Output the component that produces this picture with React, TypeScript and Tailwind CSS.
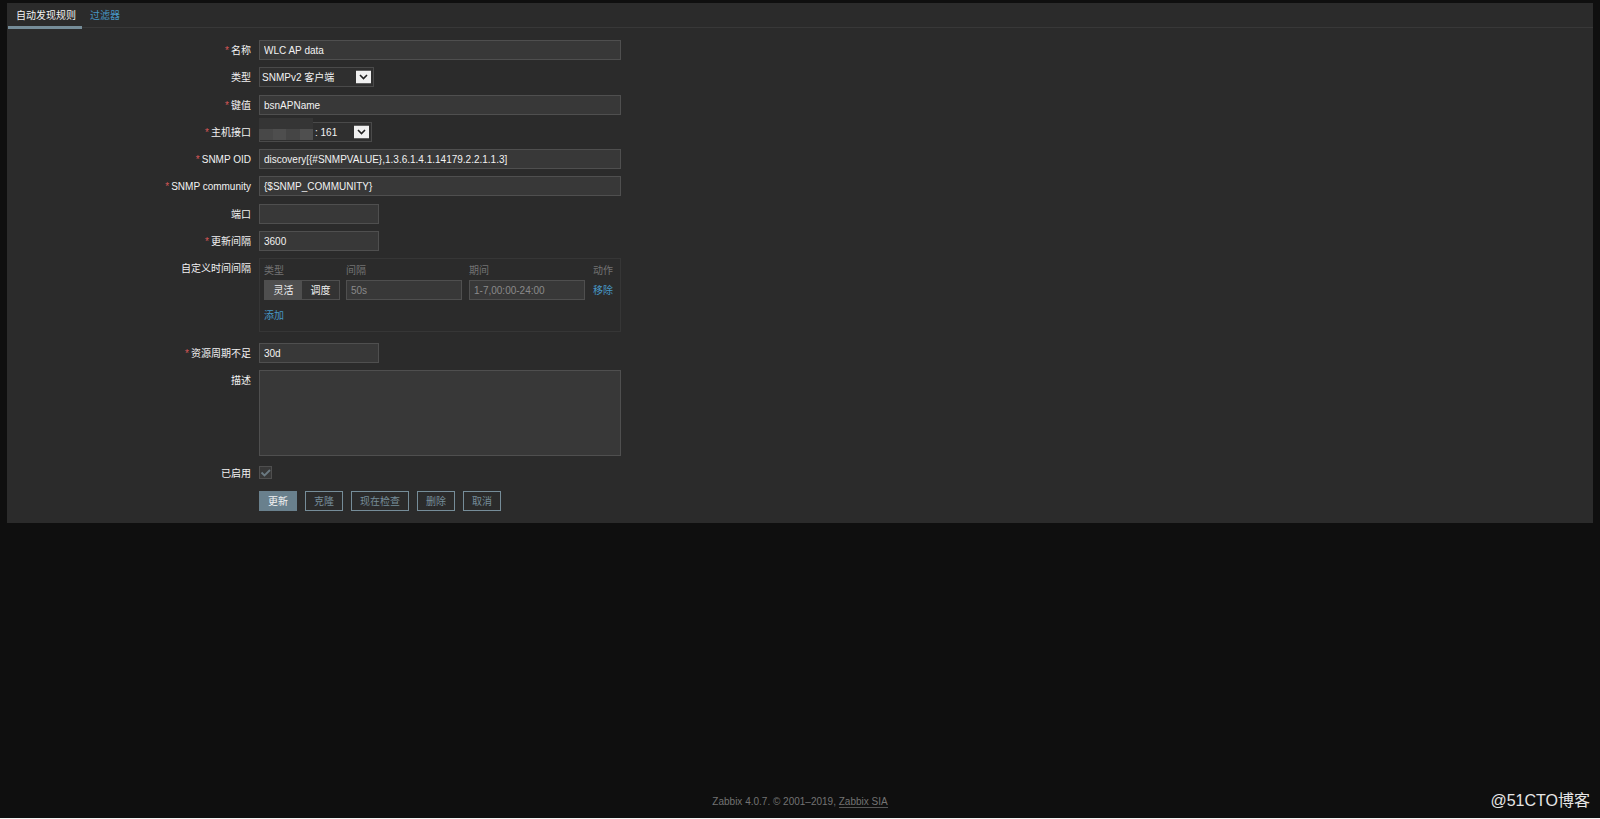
import { useState, type ReactNode } from "react";

const inputClass =
    "h-5 border border-[#4f4f4f] bg-[#383838] px-1 text-[10px] text-[#f2f2f2] placeholder:text-[#8a8a8a] outline-none focus:border-[#768d99]";
const linkClass = "text-[#4796c4] hover:text-white";
const ghostButton = "h-5 border border-[#768d99] px-2 text-[#768d99] hover:bg-[#333]";

function Row({ label, htmlFor, required, className = "", children }: { label?: string; htmlFor?: string; required?: boolean; className?: string; children: ReactNode }) {
    return (
        <div className={`grid grid-cols-[243px_1fr] gap-2 ${className}`}>
            <div className="h-5 text-right leading-[22px]">
                {label && (
                    <label htmlFor={htmlFor}>
                        {required && <span className="mr-0.5 text-[#d65656]">*</span>}
                        {label}
                    </label>
                )}
            </div>
            <div>{children}</div>
        </div>
    );
}

function Arrow() {
    return (
        <svg viewBox="0 0 15 13" className="pointer-events-none absolute top-1/2 right-[3px] h-[13px] w-[15px] -translate-y-1/2" aria-hidden="true">
            <rect width="15" height="13" fill="#f0f0f0" />
            <path d="M4 4.5l3.5 3.5L11 4.5" fill="none" stroke="#222" strokeWidth="1.6" />
        </svg>
    );
}

export default function App() {
    const [enabled, setEnabled] = useState(true);
    const [flexible, setFlexible] = useState(true);

    return (
        <div className="flex min-h-screen flex-col border-b border-[#f5f5f5] bg-[#0f0f0f] font-['Liberation_Sans','Noto_Sans_CJK_SC',sans-serif] text-[10px] text-[#f2f2f2]">
            <main className="mr-[7px] ml-[7px] mt-[3px] bg-[#2b2b2b] pb-3 pl-px">
                <nav className="flex h-[25px] border-b border-[#383838]">
                    <a href="#rule" className="h-[26px] w-[74px] border-b-[3px] border-[#768d99] pl-2 leading-[26px] whitespace-nowrap">
                        自动发现规则
                    </a>
                    <a href="#filters" className={`px-2 leading-[26px] ${linkClass}`}>
                        过滤器
                    </a>
                </nav>

                <form className="mt-3 flex flex-col gap-[7px]" onSubmit={(e) => e.preventDefault()}>
                    <Row label="名称" htmlFor="name" required>
                        <input id="name" defaultValue="WLC AP data" className={`block w-[362px] ${inputClass}`} />
                    </Row>
                    <Row label="类型" htmlFor="type" className="h-[21px]">
                        <div className="relative w-[115px]">
                            <select id="type" className="block h-5 w-full appearance-none border border-[#4a4a4a] bg-[#2f2f2f] px-0.5">
                                <option>SNMPv2 客户端</option>
                                <option>SNMPv1 客户端</option>
                            </select>
                            <Arrow />
                        </div>
                    </Row>
                    <Row label="键值" htmlFor="key" required>
                        <input id="key" defaultValue="bsnAPName" className={`block w-[362px] ${inputClass}`} />
                    </Row>
                    <Row label="主机接口" htmlFor="interface" required>
                        <div className="relative w-[113px]">
                            <select id="interface" className="block h-5 w-full appearance-none border border-[#4a4a4a] bg-[#2f2f2f] pl-[55px]">
                                <option>: 161</option>
                            </select>
                            {/* masked address */}
                            <div className="pointer-events-none absolute -top-1 left-0 grid h-[22px] w-[54px] grid-cols-4 grid-rows-2">
                                <span className="col-span-4 bg-[#353535]" />
                                <span className="bg-[#484848]" />
                                <span className="bg-[#4e4e4e]" />
                                <span className="bg-[#454545]" />
                                <span className="bg-[#4f4f4f]" />
                            </div>
                            <Arrow />
                        </div>
                    </Row>
                    <Row label="SNMP OID" htmlFor="oid" required>
                        <input id="oid" defaultValue="discovery[{#SNMPVALUE},1.3.6.1.4.1.14179.2.2.1.1.3]" className={`block w-[362px] ${inputClass}`} />
                    </Row>
                    <Row label="SNMP community" htmlFor="community" required className="h-[21px]">
                        <input id="community" defaultValue="{$SNMP_COMMUNITY}" className={`block w-[362px] ${inputClass}`} />
                    </Row>
                    <Row label="端口" htmlFor="port">
                        <input id="port" className={`block w-[120px] ${inputClass}`} />
                    </Row>
                    <Row label="更新间隔" htmlFor="delay" required>
                        <input id="delay" defaultValue="3600" className={`block w-[120px] ${inputClass}`} />
                    </Row>
                    <Row label="自定义时间间隔" className="mb-1">
                        <div className="h-[74px] w-[362px] border border-[#363636] px-1 pt-[3px]">
                            <table className="text-left">
                                <thead className="text-[#737373]">
                                    <tr className="h-[18px] leading-[16px]">
                                        <th className="w-[82px] p-0 font-normal">类型</th>
                                        <th className="w-[123px] p-0 font-normal">间隔</th>
                                        <th className="w-[124px] p-0 font-normal">期间</th>
                                        <th className="p-0 font-normal">动作</th>
                                    </tr>
                                </thead>
                                <tbody>
                                    <tr>
                                        <td className="p-0">
                                            <div className="flex h-5 w-[76px] border border-[#4f4f4f]">
                                                <button type="button" onClick={() => setFlexible(true)} className={`flex-1 ${flexible ? "bg-[#4f4f4f]" : "bg-[#333]"}`}>
                                                    灵活
                                                </button>
                                                <button type="button" onClick={() => setFlexible(false)} className={`flex-1 ${flexible ? "bg-[#333]" : "bg-[#4f4f4f]"}`}>
                                                    调度
                                                </button>
                                            </div>
                                        </td>
                                        <td className="p-0">
                                            <input aria-label="间隔" placeholder="50s" className={`block w-[116px] ${inputClass}`} />
                                        </td>
                                        <td className="p-0">
                                            <input aria-label="期间" placeholder="1-7,00:00-24:00" className={`block w-[116px] ${inputClass}`} />
                                        </td>
                                        <td className="p-0">
                                            <button type="button" className={linkClass}>
                                                移除
                                            </button>
                                        </td>
                                    </tr>
                                </tbody>
                            </table>
                            <button type="button" className={`mt-2 block ${linkClass}`}>
                                添加
                            </button>
                        </div>
                    </Row>
                    <Row label="资源周期不足" htmlFor="lifetime" required>
                        <input id="lifetime" defaultValue="30d" className={`block w-[120px] ${inputClass}`} />
                    </Row>
                    <Row label="描述" htmlFor="description">
                        <textarea id="description" className="block h-[86px] w-[362px] resize-none border border-[#4f4f4f] bg-[#383838] p-1 outline-none" />
                    </Row>
                    <Row label="已启用" htmlFor="enabled" className="h-[21px]">
                        <div className="relative flex h-[18px] w-[13px] items-center">
                            <input
                                id="enabled"
                                type="checkbox"
                                checked={enabled}
                                onChange={(e) => setEnabled(e.target.checked)}
                                className="size-[13px] appearance-none border border-[#4f4f4f] bg-[#383838]"
                            />
                            {enabled && (
                                <svg viewBox="0 0 13 13" className="pointer-events-none absolute size-[13px]" aria-hidden="true">
                                    <path d="M2.5 6.5l3 3L11 4" fill="none" stroke="#6b7a82" strokeWidth="1.8" />
                                </svg>
                            )}
                        </div>
                    </Row>
                    <Row>
                        <div className="flex gap-2">
                            <button type="submit" className="h-5 border border-[#69808d] bg-[#69808d] px-2 text-[#f2f2f2]">
                                更新
                            </button>
                            <button type="button" className={ghostButton}>克隆</button>
                            <button type="button" className={ghostButton}>现在检查</button>
                            <button type="button" className={ghostButton}>删除</button>
                            <button type="button" className={ghostButton}>取消</button>
                        </div>
                    </Row>
                </form>
            </main>

            <footer className="relative mt-auto pb-2 text-center leading-[16px] text-[#737373]">
                Zabbix 4.0.7. © 2001–2019,{" "}
                <a href="#zabbix" className="border-b border-[#555]">
                    Zabbix SIA
                </a>
                <span className="absolute right-[10px] bottom-2 text-[16px] leading-[18px] text-[#e6e6e6]">@51CTO博客</span>
            </footer>
        </div>
    );
}
